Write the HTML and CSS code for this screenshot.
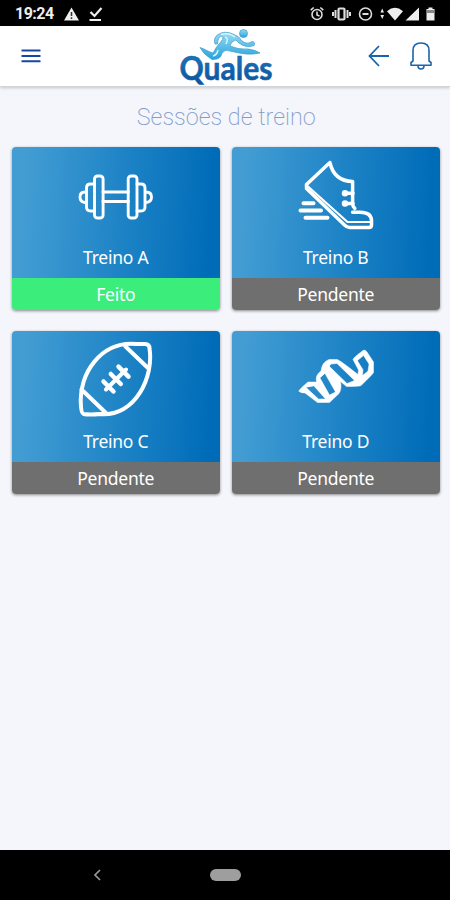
FILE: index.html
```html
<!DOCTYPE html>
<html lang="pt-BR">
<head>
<meta charset="utf-8">
<title>Quales</title>
<link rel="stylesheet" href="styles.css">
</head>
<body>
<div class="statusbar">
  <span class="clock">19:24</span>
  <svg class="status-left" width="40" height="16" viewBox="0 0 40 16">
    <path d="M7.500 1.500 15 14.500H0Z" fill="#eee"/><path d="M7.500 6v4M7.500 11.300v1.700" stroke="#333" stroke-width="1.500"/>
    <path d="M26.500 6l4 4 7-8M25.500 14h11.500" fill="none" stroke="#eee" stroke-width="2.200"/>
  </svg>
  <svg class="status-right" width="128" height="16" viewBox="0 0 128 16">
    <g fill="none" stroke="#ddd" stroke-width="1.600">
      <circle cx="7" cy="8.500" r="5"/><path d="M7 5.500v3.500l2.500 1M.7 4.200l3-2.700M13.300 4.200l-3-2.700"/>
      <rect x="28.500" y="2.500" width="6" height="11" rx="1" stroke-width="2.200"/><path d="M25.500 4v8M37.500 4v8M23 6v4M40 6v4" stroke-width="2"/>
      <circle cx="55.500" cy="8" r="6"/><path d="M52.500 8h6" stroke-width="2"/>
    </g>
    <g fill="#eee"><path d="M70.500 6.500l1.700-4L74 6.500zM70.500 9l1.700 4L74 9zM77 5.200Q85-1.500 93 5.200L85 14.500ZM95.500 14.500 109 1.500v13zM116.500 3h2V1.500h4V3h2v11.500h-8z"/></g>
    <path d="M117 4h7v3h-7z" fill="#888"/>
  </svg>
</div>
<header class="appbar">
  <svg class="menu" width="20" height="16" viewBox="0 0 20 16"><path d="M.5 2.500h19M.5 8h19M.5 13.300h19" stroke="#1748a0" stroke-width="2"/></svg>
  <svg class="logo" width="98" height="60" viewBox="0 -1 98 60">
    <defs>
      <linearGradient id="wordmark" x1="0" y1="0" x2="0" y2="1"><stop offset=".2" stop-color="#1a74bc"/><stop offset="1" stop-color="#0a5099"/></linearGradient>
      <linearGradient id="runner" x1="0" y1="0" x2="0" y2="1"><stop offset="0" stop-color="#98dcf5"/><stop offset="1" stop-color="#24a3dc"/></linearGradient>
    </defs>
    <g fill="url(#runner)" stroke="#3d9ccc" stroke-width=".7" stroke-linejoin="round">
      <path d="M22 20.500C27 22 31 25 35 26Q38 20 43 14.500Q47 10 43 9Q40 10 39.500 17L37 17Q35 11 40 7.500Q47 3 56 7.500Q61 9 64 14Q69 18 74 14.500Q78 15 76 18.500Q68 21.500 61 16L58 13Q53 14 52 19Q61 23 70 22Q78 23 82 26Q70 29 52 24Q47 22 44 26Q43 33 34 32.500Q25 27 22 20.500Z"/>
      <circle cx="65.500" cy="6.500" r="4"/>
    </g>
    <path d="M43 7.500Q51 5 57 10M47 10Q51 11 48 17M40 23Q39 28 35 29" fill="none" stroke="#d7f3fc" stroke-width="1.500"/>
    <text class="wordmark" x="1.500" y="53" textLength="93" lengthAdjust="spacingAndGlyphs" fill="url(#wordmark)" stroke="#1262aa" stroke-width=".6">Quales</text>
  </svg>
  <div class="actions">
    <svg width="22" height="24" viewBox="0 0 22 24"><path d="M21 12H1.500M11 2 1.500 12 11 22" fill="none" stroke="#1964ac" stroke-width="1.800"/></svg>
    <svg width="24" height="30" viewBox="0 0 24 30"><path d="M4 20V9.500Q4 2 12 2t8 7.500V20l2 1.500v2.800H2v-2.800ZM9 24.500q0 3.500 3 3.500t3-3.500" fill="none" stroke="#1964ac" stroke-width="1.600" stroke-linejoin="round"/></svg>
  </div>
</header>
<main class="content">
  <h1 class="title">Sessões de treino</h1>
  <div class="grid">
    <section class="card">
      <div class="card-main">
        <svg class="icon" viewBox="0 0 80 80" stroke-width="2.900">
          <rect x="18.500" y="19" width="8.600" height="42" rx="3"/><rect x="52.200" y="19" width="8.800" height="42" rx="3"/>
          <path d="M18.500 27h-4q-4 0-4 4v19q0 4 4 4h4M61 27h4q4 0 4 4v19q0 4-4 4h-4M10.500 35H9q-5 0-5 5T9 45.500h1.500M69 35h1q5.500 0 5.500 5T70 45.500h-1M27 35h25.500M27 44.500h25.500"/>
        </svg>
        <span class="name">Treino A</span>
      </div>
      <div class="state done">Feito</div>
    </section>
    <section class="card">
      <div class="card-main">
        <svg class="icon" viewBox="0 0 80 80" stroke-width="3.500">
          <path d="M33.900 5.500 10.500 27.500v4L48.500 68q2.500 2.500 5 2.500H73q2.500 0 2.500-2.500v-4q0-8.700-11.500-8.700h-7.400M33.900 5.500Q38 24 56.600 24.500v22q0 3 2.200 4.800"/>
          <path d="M12 29.500 51.500 65H75" stroke-width="2.200"/>
          <path d="M49 36.300h8M49 46.500h8" stroke-width="3.600"/><circle cx="49" cy="36.300" r="1.500"/><circle cx="49" cy="46.500" r="1.500"/>
          <path d="M7.500 46.300h10M4.500 53.500H25M9.500 60.700h22" stroke-width="4"/>
        </svg>
        <span class="name">Treino B</span>
      </div>
      <div class="state">Pendente</div>
    </section>
    <section class="card">
      <div class="card-main">
        <svg class="icon" viewBox="0 0 80 80" stroke-width="4">
          <path d="M7.500 73Q5 72 4.800 62C3 34 24 0 60 3H69Q73.500 3 73.500 7.500C78 35 60 76 24 73Q13 74 7.500 73ZM49.500 5.500 73 28M5.500 48.500 29.500 71.500M30 48.500 50 28.500"/><path d="M27.500 40.500l10 10M34.800 33l10 10M42.500 25.700l10 10" stroke-width="4.500"/>
        </svg>
        <span class="name">Treino C</span>
      </div>
      <div class="state">Pendente</div>
    </section>
    <section class="card">
      <div class="card-main">
        <svg class="icon ribbon" viewBox="0 0 80 80" stroke-width=".5">
          <path d="M3 50Q3 48.500 12 41H20.500Q19 34 25 30Q26 21 33 18.500H41Q43 18.500 62 33.500L62.500 29 57 18.500Q57 17 67 9.500Q69 8 71 11L77.500 21V31.500Q77 33 65 44.500Q64 45.500 50.500 45.500L44.500 40.500Q46 48 43 52.500L33.500 61.500H21.500L9 52Q4 52 3 50ZM10 46.500 22.500 58H29.500L18 45ZM24 37 33.500 54 39.500 51 29 32.500ZM33.500 25.500 51 42.500 58.500 39.500 41 22.500 35 23ZM61.500 19.500 67.500 14.500 73 23 72 30 66.500 34.500 67 29Z"/>
        </svg>
        <span class="name">Treino D</span>
      </div>
      <div class="state">Pendente</div>
    </section>
  </div>
</main>
<nav class="navbar">
  <svg class="back" width="10" height="14" viewBox="0 0 10 14"><path d="M8 2 3 7l5 5" fill="none" stroke="#999" stroke-width="1.700"/></svg>
  <span class="home"></span>
</nav>
</body>
</html>
```
FILE: styles.css
```css
* { box-sizing: border-box; }
body {
  margin: 0;
  height: 900px;
  display: flex;
  flex-direction: column;
  background: #f4f6fb;
  font-family: "Noto Sans", sans-serif;
  overflow: hidden;
}
svg { display: block; flex: none; }
.statusbar {
  height: 26px;
  background: #000;
  display: flex;
  align-items: center;
  padding: 2px 12px 0 15px;
}
.clock {
  width: 49px;
  color: #eee;
  font: 700 16px/20px Roboto, sans-serif;
  letter-spacing: -0.5px;
}
.status-right { margin-left: auto; }
.appbar {
  height: 61px;
  background: #fff;
  border-bottom: 1px solid #d2d4d8;
  box-shadow: 0 1px 3px rgba(0, 0, 0, .2);
  display: grid;
  grid-template-columns: 178px 98px 1fr;
  align-items: center;
}
.menu { margin-left: 20.5px; }
.logo { overflow: visible; }
.wordmark { font: 700 33px Lato, sans-serif; }
.actions {
  display: flex;
  align-items: center;
  justify-content: flex-end;
  gap: 19px;
  padding-right: 17.5px;
}
.content { flex: 1; padding: 0 10px 0 11.5px; }
.title {
  margin: 0;
  height: 60px;
  padding: 15px 0 0 1px;
  text-align: center;
  color: #859bc7;
  font: 200 23.3px/30px Roboto, sans-serif;
}
.grid {
  display: grid;
  grid-template-columns: 1fr 1fr;
  gap: 20.5px 11.5px;
}
.card {
  height: 163px;
  border-radius: 4px;
  overflow: hidden;
  color: #fff;
  font-size: 17.5px;
  letter-spacing: -0.25px;
  text-align: center;
  box-shadow: 0 1px 3px rgba(0, 0, 0, .45);
}
.card-main {
  height: 131px;
  padding-top: 10px;
  background: linear-gradient(93deg, #439dd3 6%, #1c82c5 55%, #006cb8 94%);
}
.icon {
  width: 80px;
  height: 80px;
  margin: 0 auto;
  fill: none;
  stroke: #fff;
  stroke-linecap: round;
  stroke-linejoin: round;
}
.ribbon { fill: #fff; fill-rule: evenodd; }
.name {
  display: block;
  margin-top: 9px;
  line-height: 23px;
}
.state {
  height: 32px;
  line-height: 32px;
  background: #6f6f6f;
}
.state.done { background: #3bed7b; }
.navbar {
  height: 50px;
  background: #000;
  display: flex;
  align-items: center;
  padding-left: 92px;
}
.home {
  width: 31px;
  height: 12px;
  margin-left: 108px;
  border-radius: 6px;
  background: #9e9e9e;
}
```
